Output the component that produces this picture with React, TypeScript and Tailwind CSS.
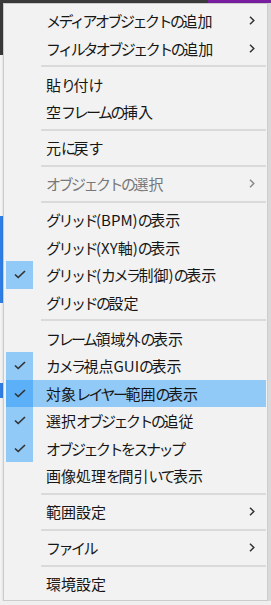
type Entry =
  | "sep"
  | {
      label: string;
      sub?: boolean;
      disabled?: boolean;
      checked?: boolean;
      hover?: boolean;
    };

const entries: Entry[] = [
  { label: "メディアオブジェクトの追加", sub: true },
  { label: "フィルタオブジェクトの追加", sub: true },
  "sep",
  { label: "貼り付け" },
  { label: "空フレームの挿入" },
  "sep",
  { label: "元に戻す" },
  "sep",
  { label: "オブジェクトの選択", sub: true, disabled: true },
  "sep",
  { label: "グリッド(BPM)の表示" },
  { label: "グリッド(XY軸)の表示" },
  { label: "グリッド(カメラ制御)の表示", checked: true },
  { label: "グリッドの設定" },
  "sep",
  { label: "フレーム領域外の表示" },
  { label: "カメラ視点GUIの表示", checked: true },
  { label: "対象レイヤー範囲の表示", checked: true, hover: true },
  { label: "選択オブジェクトの追従", checked: true },
  { label: "オブジェクトをスナップ", checked: true },
  { label: "画像処理を間引いて表示" },
  "sep",
  { label: "範囲設定", sub: true },
  "sep",
  { label: "ファイル", sub: true },
  "sep",
  { label: "環境設定" },
];

const KANA = /[\u3040-\u30ff]+|[^\u3040-\u30ff]+/g;

const Label = ({ text }: { text: string }) => (
  <>
    {(text.match(KANA) ?? []).map((run, i) =>
      /[\u3040-\u30ff]/.test(run) ? (
        <span key={i} className="tracking-[-2.5px]">
          {run}
        </span>
      ) : (
        <span key={i}>{run}</span>
      )
    )}
  </>
);

const Check = () => (
  <svg width="12" height="9" viewBox="0 0 12 9" fill="none">
    <path
      d="M1 4.5 L4.2 7.5 L11 1"
      stroke="#333"
      strokeWidth="1.7"
      strokeLinejoin="round"
    />
  </svg>
);

const Chevron = ({ color }: { color: string }) => (
  <svg width="6" height="9" viewBox="0 0 6 9" fill="none">
    <path d="M1 0.8 L4.8 4.5 L1 8.2" stroke={color} strokeWidth="1.5" />
  </svg>
);

const MenuRow = ({ entry }: { entry: Exclude<Entry, "sep"> }) => {
  return (
    <div
      className={`flex h-[27.5px] items-center ${
        entry.hover ? "bg-[#91c9f7]" : ""
      }`}>
      {/* check gutter */}
      <div
        className={`flex h-full w-[27px] shrink-0 items-center justify-center ${
          entry.checked
            ? entry.hover
              ? "bg-[#5cb0f7]"
              : "bg-[#91c9f7]"
            : ""
        }`}>
        {entry.checked && <Check />}
      </div>
      <span
        className={`ml-[13px] flex-1 whitespace-nowrap text-[15px] leading-none ${
          entry.disabled ? "text-[#787878]" : "text-[#161616]"
        }`}>
        <Label text={entry.label} />
      </span>
      {entry.sub && (
        <span className="mr-[11px] flex items-center">
          <Chevron color={entry.disabled ? "#8a8a8a" : "#333"} />
        </span>
      )}
    </div>
  );
};

export default function App() {
  return (
    <div className="flex h-[605px] w-[271px] flex-col overflow-hidden bg-[#ececec] font-['Noto_Sans_CJK_JP','Noto_Sans',sans-serif]">
      {/* window behind: top edge */}
      <div className="flex h-[3px] shrink-0">
        <div className="w-[208px] bg-[#3c3c3c]" />
        <div className="flex-1 bg-[#7b1fa2]" />
      </div>

      <div className="flex">
        <div className="w-[3px] shrink-0 bg-[linear-gradient(to_bottom,#3a3a3a_0_52px,#f6f6f6_52px_213px,#2f7fe6_213px_300px,#f4f4f4_300px_380px,#2f7fe6_380px_395px,#f4f4f4_395px)]" />

        <div className="w-[265px] shrink-0 border border-[#cccccc] bg-[#f2f2f2] pb-[2px] pl-[2px] pr-[1px] pt-[3px] shadow-[1px_1px_3px_rgba(0,0,0,0.35)]">
          {entries.map((entry, i) =>
            entry === "sep" ? (
              <div key={i} className="flex h-[8.5px] items-center pl-[35px]">
                <div className="h-[2px] w-full bg-[#dadada]" />
              </div>
            ) : (
              <MenuRow key={i} entry={entry} />
            )
          )}
        </div>

        <div className="flex-1 bg-[#d9d9d9]" />
      </div>

      <div className="flex-1 bg-[#efefef]" />
    </div>
  );
}
